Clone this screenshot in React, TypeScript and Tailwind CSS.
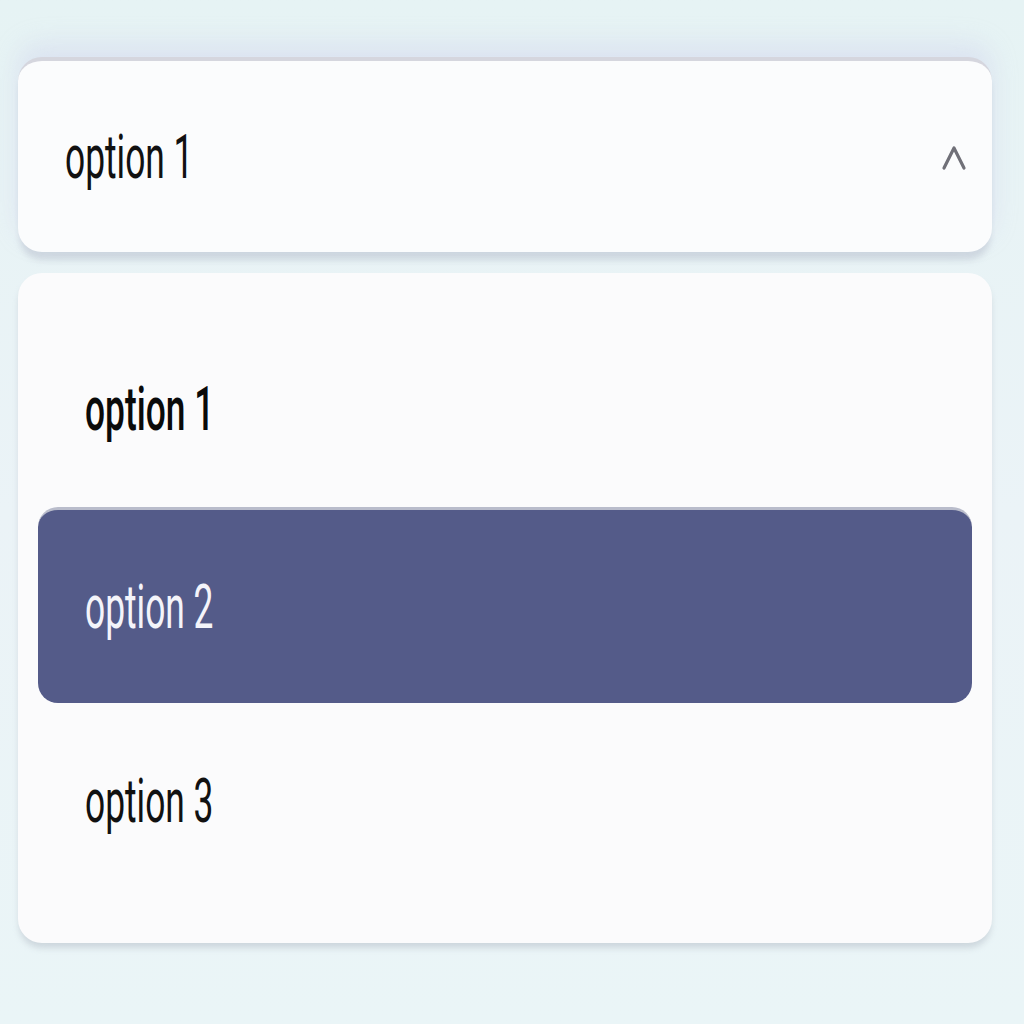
const options = ["option 1", "option 2", "option 3"];

export default function App() {
  const selected = 0;
  const highlighted = 1;

  return (
    <div className="min-h-screen w-full bg-gradient-to-b from-[#e6f3f4] via-[#ebf3f7] to-[#eaf5f7] pl-[18px] pr-[32px] pt-[57px] font-['Roboto',sans-serif]">
      {/* Trigger */}
      <div className="flex h-[195px] w-[974px] items-center justify-between rounded-[24px] border-t-[4px] border-[#d5d6de] bg-[#fbfcfd] pl-[47px] pr-[24px] shadow-[0_10px_6px_-2px_rgba(160,165,185,0.35),0_-14px_24px_rgba(200,200,235,0.35)]">
        <Label text="option 1" className="text-[#111]" />
        <svg width="28" height="36" viewBox="0 0 28 36" fill="none" className="mb-[2px]">
          <path d="M4 30 L14 10 L24 30" stroke="#707078" strokeWidth="3.2" strokeLinecap="round" strokeLinejoin="round" />
        </svg>
      </div>

      {/* Menu */}
      <div className="mt-[21px] flex w-[974px] flex-col rounded-[24px] bg-[#fbfbfc] px-[20px] pb-[44px] pt-[38px] shadow-[0_6px_6px_-1px_rgba(170,180,190,0.45)]">
        {options.map((o, i) => (
          <div
            key={o}
            className={
              i === highlighted
                ? "flex h-[196px] items-center rounded-[20px] border-t-[3px] border-[#b9bccb] bg-[#545b89] pl-[47px]"
                : "flex h-[196px] items-center pl-[47px]"
            }
          >
            <Label
              text={o}
              className={
                i === highlighted
                  ? "text-[#f4f4fa]"
                  : i === selected
                  ? "font-medium text-[#0a0a0a]"
                  : "text-[#111]"
              }
            />
          </div>
        ))}
      </div>
    </div>
  );
}

function Label({ text, className }: { text: string; className: string }) {
  return (
    <span className={`inline-block origin-left scale-x-[0.57] whitespace-nowrap text-[62px] leading-none ${className}`}>
      {text}
    </span>
  );
}
